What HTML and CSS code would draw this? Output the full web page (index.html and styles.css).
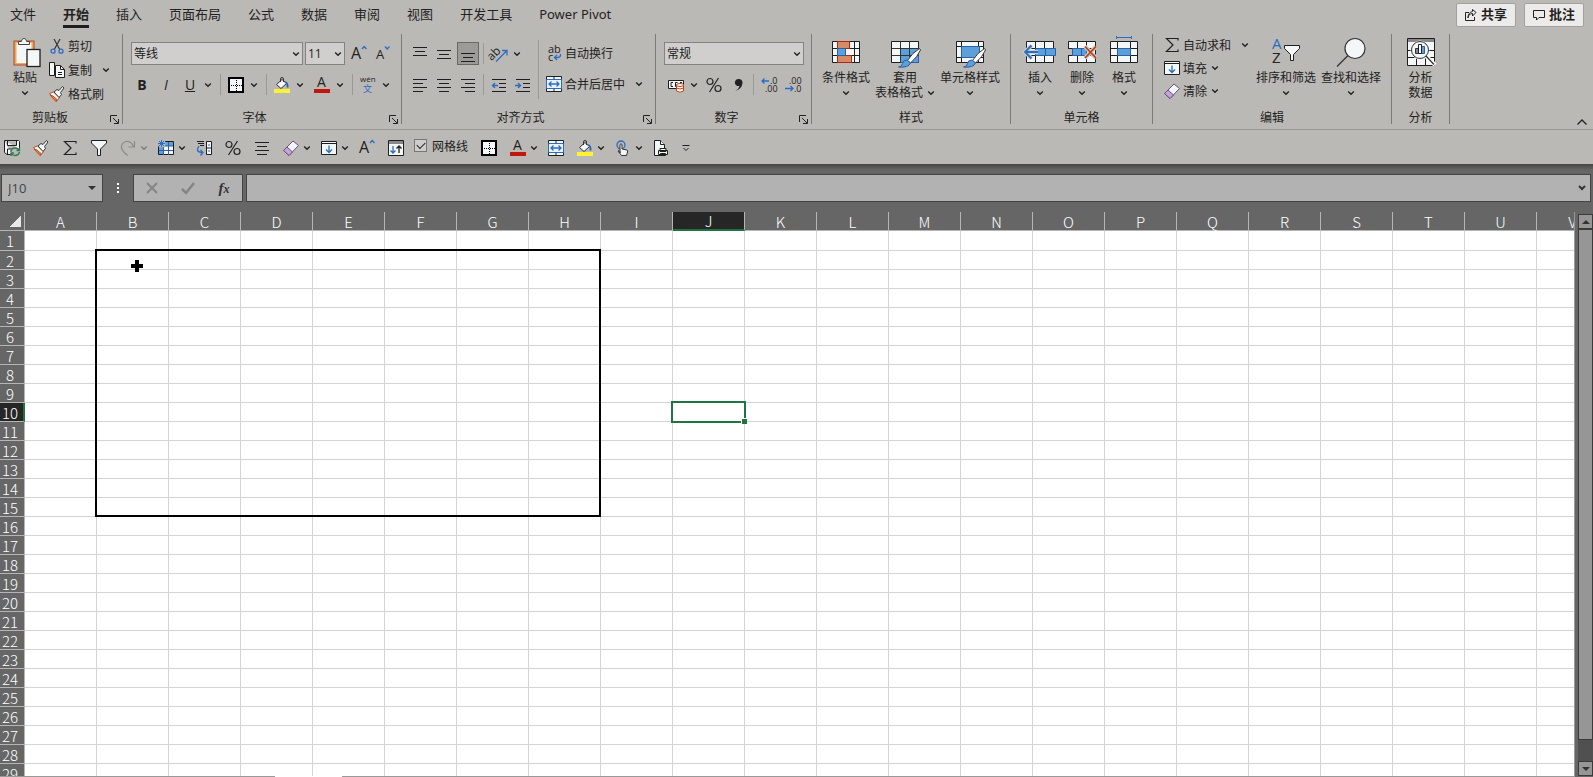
FILE: index.html
```
<!DOCTYPE html>
<html lang="zh-CN">
<head>
    <meta charset="UTF-8">
    <meta name="viewport" content="width=device-width, initial-scale=1.0">
    <title>工作簿</title>
    <link rel="stylesheet" href="styles.css">
</head>
<body>
    <svg class="sprite" aria-hidden="true">
        <symbol id="chev" viewBox="0 0 8 8"><path d="M1.2 2.5L4 5.2l2.8-2.7" fill="none" stroke="#222" stroke-width="1.4"/></symbol>
        <symbol id="launch" viewBox="0 0 9 9"><path d="M.5 7V.5H7M3 3l5 5M8.5 4v4.5H4" fill="none" stroke="#222"/></symbol>
        <symbol id="paste" viewBox="-2 0 30 30">
            <rect x="2" y="4" width="20" height="24" fill="#e9ad62" stroke="#b5471f"/>
            <rect x="4.500" y="6" width="15" height="20" fill="#f4f7f7"/>
            <path d="M6.500 7.500v-3h3c0-4 5-4 5 0h3v3z" fill="#f4f7f7" stroke="#444"/>
            <rect x="15" y="12.500" width="13" height="17" fill="#f4f7f7" stroke="#1e1e1e" stroke-width="1.300"/>
        </symbol>
        <symbol id="cut" viewBox="0 0 16 16">
            <path d="M5 1l6 11M11 1L5 12" fill="none" stroke="#333" stroke-width="1.200"/>
            <circle cx="4" cy="13.200" r="2" fill="none" stroke="#2b6cc4" stroke-width="1.300"/>
            <circle cx="12" cy="13.200" r="2" fill="none" stroke="#2b6cc4" stroke-width="1.300"/>
        </symbol>
        <symbol id="copy" viewBox="0 0 16 16">
            <path d="M.5.5h5v13h-5z" fill="#f4f7f7" stroke="#1e1e1e"/>
            <path d="M6.500 3.500h5l4 4v8h-9z" fill="#f4f7f7" stroke="#1e1e1e"/>
            <path d="M11.500 3.500v4h4M9 10.500h4M9 12.500h4" fill="none" stroke="#1e1e1e"/>
        </symbol>
        <symbol id="brush" viewBox="0 0 16 16">
            <path d="M.5 7.500l4-1.500 6 5.500-3 4z" fill="#f4f7f7" stroke="#c0501f"/>
            <path d="M1 9l3 1 4 3.500-1 2z" fill="#e8833a" stroke="#c0501f"/>
            <path d="M5 6l3-2.500 2 1L13.500.5l1.500 1.500-3.500 4.500 1 2-2.500 3z" fill="#f4f7f7" stroke="#333"/>
        </symbol>
        <symbol id="borders" viewBox="0 0 16 16"><path d="M1 1h14v14H1z" fill="#f4f7f7" stroke="#000" stroke-width="2"/><path d="M8.500 3v11M3 8.500h11" stroke="#000" stroke-dasharray="1 1"/></symbol>
        <symbol id="fill" viewBox="0 0 16 16">
            <path d="M8 2.500L2.500 7.500l4.500 4 5.500-5z" fill="#f4f7f7" stroke="#333"/>
            <path d="M6.500 5V2q0-1.500 1.500-1.500T9.500 2v3" fill="none" stroke="#333"/>
            <path d="M11 5q3 1 2.500 5.500" fill="none" stroke="#2b5fa8" stroke-width="1.800"/>
            <path d="M0 12h16v4H0z" fill="#fff133"/>
        </symbol>
        <symbol id="top" viewBox="0 0 16 16"><path d="M1 1.500h14M3 5.500h10M1 9.500h14" stroke="#1e1e1e"/></symbol>
        <symbol id="middle" viewBox="0 0 16 16"><path d="M1 4.500h14M3 8.500h10M1 12.500h14" stroke="#1e1e1e"/></symbol>
        <symbol id="bottom" viewBox="0 0 16 16"><path d="M1 7.500h14M3 11.500h10M1 15.500h14" stroke="#1e1e1e"/></symbol>
        <symbol id="left" viewBox="0 0 16 16"><path d="M1 2.500h14M1 6.500h10M1 10.500h14M1 14.500h10" stroke="#1e1e1e"/></symbol>
        <symbol id="center" viewBox="0 0 16 16"><path d="M1 2.500h14M3 6.500h10M1 10.500h14M3 14.500h10" stroke="#1e1e1e"/></symbol>
        <symbol id="right" viewBox="0 0 16 16"><path d="M1 2.500h14M5 6.500h10M1 10.500h14M5 14.500h10" stroke="#1e1e1e"/></symbol>
        <symbol id="outdent" viewBox="0 0 16 16"><path d="M1 2.500h14M8 6.500h7M8 10.500h7M1 14.500h14" stroke="#1e1e1e"/><path d="M7 8.500H1.500M4 6L1.500 8.500 4 11" fill="none" stroke="#2b6cc4" stroke-width="1.400"/></symbol>
        <symbol id="indent" viewBox="0 0 16 16"><path d="M1 2.500h14M8 6.500h7M8 10.500h7M1 14.500h14" stroke="#1e1e1e"/><path d="M0 8.500h5.500M3 6l2.500 2.500L3 11" fill="none" stroke="#2b6cc4" stroke-width="1.400"/></symbol>
        <symbol id="merge" viewBox="0 0 16 16">
            <path d="M.5.5h15v15H.5z" fill="#f4f7f7" stroke="#1e1e1e"/><path d="M8 0v4M8 12v4" stroke="#1e1e1e"/>
            <path d="M.5 3.500h15v9H.5z" fill="#eaf3fb" stroke="#2b6cc4"/>
            <path d="M3 8h10M5.500 5.500L3 8l2.500 2.500M10.500 5.500L13 8l-2.500 2.500" fill="none" stroke="#2b6cc4" stroke-width="1.300"/>
        </symbol>
        <symbol id="money" viewBox="0 0 16 16">
            <path d="M.5 3.500h15v8H.5z" fill="#f4f7f7" stroke="#1e1e1e"/><path d="M5 5.500H3v4h2M9.500 5.500h-2v4h2M12 5.500h2" fill="none" stroke="#1e1e1e"/>
            <path d="M8.500 8v6q3.500 2.500 7 0V8z" fill="#fff" stroke="#c0400f"/><ellipse cx="12" cy="8" rx="3.500" ry="1.500" fill="#fff" stroke="#c0400f"/><path d="M8.500 11q3.500 2 7 0" fill="none" stroke="#c0400f"/>
        </symbol>
        <symbol id="percent" viewBox="0 0 16 16"><circle cx="4" cy="4.500" r="3" fill="none" stroke="#222" stroke-width="1.200"/><circle cx="12" cy="11.500" r="3" fill="none" stroke="#222" stroke-width="1.200"/><path d="M12.500 1l-9 14" stroke="#222" stroke-width="1.200"/></symbol>
        <symbol id="comma" viewBox="0 0 16 16"><path d="M8.500 2a3.500 3.500 0 1 0 1 6.800Q9 12 5 14q7-2 7.500-8Q12.500 2 8.500 2z" fill="#222"/></symbol>
        <symbol id="cond" viewBox="0 0 30 30">
            <path d="M1.500 4.500h27v21h-27zM1.500 11.500h27M1.500 18.500h27M6.500 4.500v21M23.500 4.500v21" fill="#f4f7f7" stroke="#1e1e1e"/>
            <path d="M6.500 4.500h12v7h-12zM6.500 18.500h14v7h-14z" fill="#d58a6a" stroke="#b5240f"/><path d="M6.500 11.500h8v7h-8z" fill="#5ba0d8" stroke="#2b5fa8"/>
        </symbol>
        <symbol id="tablefmt" viewBox="0 0 30 30">
            <path d="M1.500 4.500h27v21h-27z" fill="#f4f7f7" stroke="#1e1e1e"/><path d="M10.500 11.500h18v14h-18z" fill="#5ba0d8" stroke="#2b5fa8"/>
            <path d="M1.500 11.500h27M1.500 18.500h27M10.500 4.500v21M19.500 4.500v21" fill="none" stroke="#333"/>
            <path d="M29.500 11.500q-7 4-12 12l3 2.500q7-6 10-13z" fill="#fff" stroke="#333"/><path d="M17 23q-4 0-4.500 3.500T8.500 30q10 1 12-4z" fill="#5ba0d8" stroke="#2b5fa8"/>
        </symbol>
        <symbol id="cellstyle" viewBox="0 0 30 30">
            <path d="M1.500 4.500h27v21h-27zM1.500 9.500h27M1.500 20.500h27M6.500 4.500v21M23.500 4.500v21" fill="#f4f7f7" stroke="#1e1e1e"/><path d="M6.500 9.500h18v11h-18z" fill="#5ba0d8" stroke="#2b5fa8"/>
            <path d="M29.500 11.500q-7 4-12 12l3 2.500q7-6 10-13z" fill="#fff" stroke="#333"/><path d="M17 23q-4 0-4.500 3.500T8.500 30q10 1 12-4z" fill="#5ba0d8" stroke="#2b5fa8"/>
        </symbol>
        <symbol id="insert" viewBox="0 0 30 30">
            <path d="M1.500 4.500h27v21h-27zM10.500 4.500v21M19.500 4.500v21M1.500 11.500h27M1.500 18.500h27" fill="#f4f7f7" stroke="#1e1e1e"/>
            <path d="M10.500 11.500h20v7h-20zM20.500 11.500v7" fill="#5ba0d8" stroke="#2b5fa8"/><path d="M13 15H0M6.500 8.500L0 15l6.500 6.500" fill="none" stroke="#c9cccc" stroke-width="4"/><path d="M13 15H0M6.500 8.500L0 15l6.500 6.500" fill="none" stroke="#2b6cc4" stroke-width="1.800"/>
        </symbol>
        <symbol id="delete" viewBox="0 0 30 30">
            <path d="M1.500 4.500h27v21h-27zM10.500 4.500v21M19.500 4.500v21M1.500 11.500h27M1.500 18.500h27" fill="#f4f7f7" stroke="#1e1e1e"/>
            <path d="M0 12h5v6H0z" fill="#bbb9b5"/><path d="M5.500 11.500h14v7h-14zM14.500 11.500v7" fill="#5ba0d8" stroke="#2b5fa8"/><path d="M18 9.500l11 11.500M29 9.500L18 21" stroke="#c9cccc" stroke-width="4"/><path d="M18 9.500l11 11.500M29 9.500L18 21" stroke="#c0400f" stroke-width="1.800"/>
        </symbol>
        <symbol id="format" viewBox="0 0 30 30">
            <path d="M1.500 4.500h27v21h-27zM8.500 4.500v21M21.500 4.500v21M1.500 11.500h27M1.500 18.500h27" fill="#f4f7f7" stroke="#1e1e1e"/><path d="M8.500 11.500h13v7h-13z" fill="#5ba0d8" stroke="#2b5fa8"/><path d="M7.500.5h15M7.500-1v3M22.500-1v3" stroke="#2b6cc4"/>
        </symbol>
        <symbol id="sum" viewBox="0 0 16 16"><path d="M14 3.500V1.500H2.500L9 8l-6.500 6.500H14v-2" fill="none" stroke="#222" stroke-width="1.200"/></symbol>
        <symbol id="filldown" viewBox="0 0 16 16"><path d="M.5 1.500h15v13H.5zM.5 3.500h15" fill="#f4f7f7" stroke="#1e1e1e"/><path d="M8 5.500v7M5 9.500l3 3 3-3" fill="none" stroke="#2b6cc4" stroke-width="1.300"/></symbol>
        <symbol id="eraser" viewBox="0 0 16 16"><path d="M10 1l5.500 4.500L6 15.500.5 10.500z" fill="#f4f7f7" stroke="#6b4a86"/><path d="M4 7l5.500 5L6 15.500.5 10.500z" fill="#c2a5d3" stroke="#6b4a86"/></symbol>
        <symbol id="find" viewBox="0 0 30 30"><circle cx="19" cy="11.500" r="10" fill="#f4f7f7" stroke="#333" stroke-width="1.200"/><path d="M12 18.500L1 29.500" stroke="#333" stroke-width="1.300"/></symbol>
        <symbol id="analyze" viewBox="0 0 30 30">
            <path d="M1.500 1.500h27v27h-27zM1.500 13.500h27M1.500 20.500h27M10.500 20v8M19.500 20v8" fill="#f4f7f7" stroke="#1e1e1e"/><path d="M2 2h26v3H2z" fill="#888"/>
            <circle cx="14" cy="13" r="9.500" fill="#f4f7f7"/><path d="M20 19l9 9" stroke="#fff" stroke-width="4"/><circle cx="14" cy="13" r="8.500" fill="#f4f7f7" stroke="#333"/><path d="M20 19l8 8.500" stroke="#333" stroke-width="1.300"/>
            <path d="M9.500 11.500h3v5h-3z" fill="#888" stroke="#333"/><path d="M15.500 9.500h3v7h-3z" fill="#5ba0d8" stroke="#2b5fa8"/><path d="M12.500 7.500h3v9h-3z" fill="#fff" stroke="#1e1e1e"/>
        </symbol>
        <symbol id="save" viewBox="0 0 16 16"><path d="M.5.5h14l1 1V9M8 14.500H3l-2.500-2V.5M3.500.5v5h9v-5M3.500 14v-5h4" fill="#f4f7f7" stroke="#1e1e1e"/><path d="M7 12q0-4 4-4 3 0 4 2.500M15.500 7.500v3h-3M15.500 12q-1 3.500-4.500 3.500-2.500 0-3.500-2M7 16v-3h3" fill="none" stroke="#2f7d54" stroke-width="1.400"/></symbol>
        <symbol id="funnel" viewBox="0 0 16 16"><path d="M.5.500h15v2.500l-6 6v6.500h-3V9l-6-6z" fill="#f4f7f7" stroke="#1e1e1e"/></symbol>
        <symbol id="redo" viewBox="0 0 16 16"><path d="M14.500 1v6H8.500M14 7Q11 1 6 1.500 1 3 1.500 8 2.500 12 8 15.500" fill="none" stroke="#8d8b88" stroke-width="1.200"/></symbol>
        <symbol id="freeze" viewBox="0 0 16 16"><path d="M.5 1.500h15v13H.5z" fill="#f4f7f7" stroke="#1e1e1e"/><path d="M6 2h9v4H6zM1 6h5v8H1z" fill="#5ba0d8"/><path d="M1 6h14M1 10.500h14M5.500 6v9M10.500 2v13" stroke="#2b5fa8"/><circle cx="3.500" cy="3.500" r="4" fill="#bbb9b5"/><path d="M3.500 0v7M0 3.500h7M1 1l5 5M6 1L1 6" stroke="#2b6cc4"/></symbol>
        <symbol id="sortcol" viewBox="0 0 16 16"><path d="M1 1.500h7M2 3.500h6M4 5.500h4" stroke="#1e1e1e"/><path d="M10.500 1.500h5v13h-5z" fill="#f4f7f7" stroke="#1e1e1e"/><path d="M11 8h4" stroke="#1e1e1e"/><path d="M12 5h2M12 11h2" stroke="#2b6cc4"/><path d="M3 6q-4 6 3 6.500M4.500 10L7 12.500 4.500 15.500" fill="none" stroke="#2b6cc4" stroke-width="1.300"/></symbol>
        <symbol id="updown" viewBox="0 0 16 16"><path d="M.5.500h15v15H.5z" fill="#f4f7f7" stroke="#1e1e1e"/><path d="M1 1h14v3H1z" fill="#888"/><path d="M5 6v7M2.500 10.500L5 13l2.500-2.500" fill="none" stroke="#2b6cc4" stroke-width="1.300"/><path d="M11 13V6M8.500 8.500L11 6l2.500 2.500" fill="none" stroke="#1e1e1e" stroke-width="1.300"/></symbol>
        <symbol id="touch" viewBox="0 0 16 16"><circle cx="6" cy="5" r="4" fill="none" stroke="#2b6cc4" stroke-width="1.300"/><path d="M5 13V4.500q1-1.500 2 0V9l5 1q1 .5.500 2l-1 3.500H6.500L3 11q.5-1.500 2 .500z" fill="#f4f7f7" stroke="#333"/></symbol>
        <symbol id="print" viewBox="0 0 16 16"><path d="M1.500.500h6l4 4v11h-10z" fill="#f4f7f7" stroke="#1e1e1e"/><path d="M7.500.500v4h4M7 8.500h6v3H7zM5.500 10.500h9v4h-9zM7.500 13.500h5v2h-5z" fill="#f4f7f7" stroke="#1e1e1e"/></symbol>
        <symbol id="more" viewBox="0 0 8 8"><path d="M.5 1.500h7M1.500 4L4 6.500 6.500 4" fill="none" stroke="#222"/></symbol>
        <symbol id="share" viewBox="0 0 12 12"><path d="M4 3.500H.5v8h9V8M3 9q0-4 4.500-4.500V7L11 3.500 7.500.5v2Q3 3.500 3 9z" fill="none" stroke="#222"/></symbol>
        <symbol id="comment" viewBox="0 0 12 12"><path d="M.5 1.500h11v7H6L3.500 11V8.500h-3z" fill="none" stroke="#222"/></symbol>
    </svg>

    <header class="top">
        <nav class="tabs">
            <a href="#">文件</a>
            <a href="#" class="active">开始</a>
            <a href="#">插入</a>
            <a href="#">页面布局</a>
            <a href="#">公式</a>
            <a href="#">数据</a>
            <a href="#">审阅</a>
            <a href="#">视图</a>
            <a href="#">开发工具</a>
            <a href="#">Power Pivot</a>
        </nav>
        <div class="actions">
            <button><svg><use href="#share"/></svg>共享</button>
            <button><svg><use href="#comment"/></svg>批注</button>
        </div>
    </header>

    <section class="ribbon">
        <div class="group clipboard">
            <div class="body">
                <button class="big"><svg><use href="#paste"/></svg>粘贴<svg class="chev"><use href="#chev"/></svg></button>
                <div class="stack">
                    <button class="cmd"><svg><use href="#cut"/></svg>剪切</button>
                    <button class="cmd"><svg><use href="#copy"/></svg>复制<svg class="chev far"><use href="#chev"/></svg></button>
                    <button class="cmd"><svg><use href="#brush"/></svg>格式刷</button>
                </div>
            </div>
            <div class="title">剪贴板</div>
            <button class="launch" aria-label="剪贴板设置"><svg><use href="#launch"/></svg></button>
        </div>

        <div class="group font">
            <div class="body rows">
                <div class="row">
                    <div class="combo name"><select aria-label="字体"><option>等线</option></select><svg class="chev"><use href="#chev"/></svg></div>
                    <div class="combo size"><select aria-label="字号"><option>11</option></select><svg class="chev"><use href="#chev"/></svg></div>
                    <button class="tool" aria-label="增大字号"><svg viewBox="0 0 16 16"><text x="0" y="13" font-size="16">A</text><path d="M11 3l2.200-2.500L15.500 3" fill="none" stroke="#2b6cc4" stroke-width="1.300"/></svg></button>
                    <button class="tool" aria-label="减小字号"><svg viewBox="0 0 16 16"><text x="1" y="13" font-size="13">A</text><path d="M10 .5L12.200 3 14.500.5" fill="none" stroke="#2b6cc4" stroke-width="1.300"/></svg></button>
                </div>
                <div class="row">
                    <button class="tool"><b>B</b></button>
                    <button class="tool"><i>I</i></button>
                    <button class="tool"><u>U</u></button>
                    <button class="drop" aria-label="下划线"><svg class="chev"><use href="#chev"/></svg></button>
                    <span class="sep"></span>
                    <button class="tool" aria-label="边框"><svg><use href="#borders"/></svg></button>
                    <button class="drop" aria-label="更多边框"><svg class="chev"><use href="#chev"/></svg></button>
                    <span class="sep"></span>
                    <button class="tool" aria-label="填充颜色"><svg><use href="#fill"/></svg></button>
                    <button class="drop wide" aria-label="更多填充"><svg class="chev"><use href="#chev"/></svg></button>
                    <button class="tool" aria-label="字体颜色"><svg viewBox="0 0 16 16"><text x="3" y="10" font-size="14">A</text><path d="M0 12h16v4H0z" fill="#c3170d"/></svg></button>
                    <button class="drop" aria-label="更多颜色"><svg class="chev"><use href="#chev"/></svg></button>
                    <span class="sep"></span>
                    <button class="tool" aria-label="拼音"><svg viewBox="0 0 16 16"><text x="0" y="5" font-size="8">wén</text><text class="blue" x="3" y="15" font-size="9">文</text></svg></button>
                    <button class="drop" aria-label="更多拼音"><svg class="chev"><use href="#chev"/></svg></button>
                </div>
            </div>
            <div class="title">字体</div>
            <button class="launch" aria-label="字体设置"><svg><use href="#launch"/></svg></button>
        </div>

        <div class="group align">
            <div class="body">
                <div class="rows">
                    <div class="row">
                        <button class="tool" aria-label="顶端对齐"><svg><use href="#top"/></svg></button>
                        <button class="tool" aria-label="垂直居中"><svg><use href="#middle"/></svg></button>
                        <button class="tool on" aria-label="底端对齐"><svg><use href="#bottom"/></svg></button>
                        <span class="sep tight"></span>
                        <button class="tool" aria-label="方向"><svg viewBox="0 0 16 16"><text x="-3" y="11" font-size="12" transform="rotate(-45 4 9)">ab</text><path d="M5 15.500L15.500 5M11 4.500h5v5" fill="none" stroke="#2b6cc4" stroke-width="1.300"/></svg></button>
                        <button class="drop" aria-label="更多方向"><svg class="chev"><use href="#chev"/></svg></button>
                    </div>
                    <div class="row">
                        <button class="tool" aria-label="左对齐"><svg><use href="#left"/></svg></button>
                        <button class="tool" aria-label="居中"><svg><use href="#center"/></svg></button>
                        <button class="tool" aria-label="右对齐"><svg><use href="#right"/></svg></button>
                        <span class="sep tight"></span>
                        <button class="tool" aria-label="减少缩进"><svg><use href="#outdent"/></svg></button>
                        <button class="tool" aria-label="增加缩进"><svg><use href="#indent"/></svg></button>
                    </div>
                </div>
                <div class="rows merge">
                    <div class="row"><button class="cmd"><svg viewBox="0 0 16 16"><text x="2" y="8" font-size="11">ab</text><text x="2" y="16" font-size="11">c</text><path d="M14.500 9v1q0 2.500-3 2.500H8.500M11 10l-2.500 2.500L11 15" fill="none" stroke="#2b6cc4" stroke-width="1.300"/></svg>自动换行</button></div>
                    <div class="row"><button class="cmd"><svg><use href="#merge"/></svg>合并后居中<svg class="chev far"><use href="#chev"/></svg></button></div>
                </div>
            </div>
            <div class="title">对齐方式</div>
            <button class="launch" aria-label="对齐设置"><svg><use href="#launch"/></svg></button>
        </div>

        <div class="group number">
            <div class="body rows">
                <div class="row">
                    <div class="combo format"><select aria-label="数字格式"><option>常规</option></select><svg class="chev"><use href="#chev"/></svg></div>
                </div>
                <div class="row">
                    <button class="tool" aria-label="会计格式"><svg><use href="#money"/></svg></button>
                    <button class="drop" aria-label="更多货币"><svg class="chev"><use href="#chev"/></svg></button>
                    <button class="tool percent" aria-label="百分比"><svg><use href="#percent"/></svg></button>
                    <button class="tool" aria-label="千位分隔"><svg><use href="#comma"/></svg></button>
                    <span class="sep tight"></span>
                    <button class="tool" aria-label="增加小数位"><svg viewBox="0 0 16 16"><text x="9" y="7" font-size="9">.0</text><text x="4" y="15" font-size="9">.00</text><path d="M8 4H1M3.500 1.500L1 4l2.500 2.500" fill="none" stroke="#2b6cc4" stroke-width="1.300"/></svg></button>
                    <button class="tool" aria-label="减少小数位"><svg viewBox="0 0 16 16"><text x="4" y="7" font-size="9">.00</text><text x="9" y="15" font-size="9">.0</text><path d="M0 11.500h8M5.500 9L8 11.500 5.500 14" fill="none" stroke="#2b6cc4" stroke-width="1.300"/></svg></button>
                </div>
            </div>
            <div class="title">数字</div>
            <button class="launch" aria-label="数字设置"><svg><use href="#launch"/></svg></button>
        </div>

        <div class="group styles">
            <div class="body">
                <button class="big"><svg><use href="#cond"/></svg>条件格式<svg class="chev"><use href="#chev"/></svg></button>
                <button class="big"><svg><use href="#tablefmt"/></svg>套用<span>表格格式<svg class="chev"><use href="#chev"/></svg></span></button>
                <button class="big"><svg><use href="#cellstyle"/></svg>单元格样式<svg class="chev"><use href="#chev"/></svg></button>
            </div>
            <div class="title">样式</div>
        </div>

        <div class="group cells">
            <div class="body">
                <button class="big"><svg><use href="#insert"/></svg>插入<svg class="chev"><use href="#chev"/></svg></button>
                <button class="big"><svg><use href="#delete"/></svg>删除<svg class="chev"><use href="#chev"/></svg></button>
                <button class="big"><svg><use href="#format"/></svg>格式<svg class="chev"><use href="#chev"/></svg></button>
            </div>
            <div class="title">单元格</div>
        </div>

        <div class="group edit">
            <div class="body">
                <div class="stack">
                    <button class="cmd"><svg><use href="#sum"/></svg>自动求和<svg class="chev far"><use href="#chev"/></svg></button>
                    <button class="cmd"><svg><use href="#filldown"/></svg>填充<svg class="chev"><use href="#chev"/></svg></button>
                    <button class="cmd"><svg><use href="#eraser"/></svg>清除<svg class="chev"><use href="#chev"/></svg></button>
                </div>
                <button class="big"><svg viewBox="0 0 30 30"><text class="blue" x="1" y="12" font-size="15">A</text><text x="1" y="26" font-size="15">Z</text><path d="M13.500 8.500h15v3l-6 6v6h-3v-6l-6-6z" fill="#f4f7f7" stroke="#1e1e1e"/></svg>排序和筛选<svg class="chev"><use href="#chev"/></svg></button>
                <button class="big"><svg><use href="#find"/></svg>查找和选择<svg class="chev"><use href="#chev"/></svg></button>
            </div>
            <div class="title">编辑</div>
        </div>

        <div class="group analysis">
            <div class="body">
                <button class="big"><svg><use href="#analyze"/></svg>分析<span>数据</span></button>
            </div>
            <div class="title">分析</div>
        </div>

        <button class="collapse" aria-label="折叠功能区"><svg viewBox="0 0 10 6"><path d="M.5 5.500L5 1l4.500 4.500" fill="none" stroke="#222" stroke-width="1.300"/></svg></button>
    </section>

    <div class="quick">
        <button aria-label="保存"><svg><use href="#save"/></svg></button>
        <button aria-label="格式刷"><svg><use href="#brush"/></svg></button>
        <button aria-label="求和"><svg><use href="#sum"/></svg></button>
        <button aria-label="筛选"><svg><use href="#funnel"/></svg></button>
        <button class="split off" aria-label="恢复"><svg><use href="#redo"/></svg><svg class="chev"><use href="#chev"/></svg></button>
        <button class="split" aria-label="冻结窗格"><svg><use href="#freeze"/></svg><svg class="chev"><use href="#chev"/></svg></button>
        <button aria-label="排序"><svg><use href="#sortcol"/></svg></button>
        <button aria-label="百分比"><svg><use href="#percent"/></svg></button>
        <button aria-label="居中"><svg><use href="#center"/></svg></button>
        <button class="split" aria-label="清除"><svg><use href="#eraser"/></svg><svg class="chev"><use href="#chev"/></svg></button>
        <button class="split" aria-label="填充"><svg><use href="#filldown"/></svg><svg class="chev"><use href="#chev"/></svg></button>
        <button aria-label="增大字号"><svg viewBox="0 0 16 16"><text x="0" y="13" font-size="16">A</text><path d="M11 3l2.200-2.500L15.500 3" fill="none" stroke="#2b6cc4" stroke-width="1.300"/></svg></button>
        <button aria-label="行高"><svg><use href="#updown"/></svg></button>
        <label><input type="checkbox" checked>网格线</label>
        <button aria-label="边框"><svg><use href="#borders"/></svg></button>
        <button class="split" aria-label="字体颜色"><svg viewBox="0 0 16 16"><text x="3" y="10" font-size="14">A</text><path d="M0 12h16v4H0z" fill="#c3170d"/></svg><svg class="chev"><use href="#chev"/></svg></button>
        <button aria-label="合并"><svg><use href="#merge"/></svg></button>
        <button class="split" aria-label="填充颜色"><svg><use href="#fill"/></svg><svg class="chev"><use href="#chev"/></svg></button>
        <button class="split" aria-label="触摸模式"><svg><use href="#touch"/></svg><svg class="chev"><use href="#chev"/></svg></button>
        <button aria-label="打印预览"><svg><use href="#print"/></svg></button>
        <button aria-label="自定义"><svg class="chev"><use href="#more"/></svg></button>
    </div>

    <div class="formula">
        <div class="namebox"><input type="text" value="J10" aria-label="名称框"><svg viewBox="0 0 8 4"><path d="M0 0h8L4 4z" fill="#333"/></svg></div>
        <span class="dots"></span>
        <div class="fx">
            <button aria-label="取消"><svg viewBox="0 0 12 12"><path d="M1 1l10 10M11 1L1 11" stroke="#858585" stroke-width="2"/></svg></button>
            <button aria-label="输入"><svg viewBox="0 0 12 12"><path d="M0 7l4 4 8-10" fill="none" stroke="#858585" stroke-width="2.500"/></svg></button>
            <button aria-label="插入函数"><i>f<small>x</small></i></button>
        </div>
        <div class="entry"><input type="text" aria-label="编辑栏"><svg class="chev" viewBox="0 0 8 8"><path d="M1 2l3 3 3-3" fill="none" stroke="#333" stroke-width="2"/></svg></div>
    </div>

    <main class="work">
        <div class="sheet">
            <table id="grid"></table>
        </div>
        <div class="scroll">
            <button aria-label="向上"><svg viewBox="0 0 8 4"><path d="M0 4h8L4 0z" fill="#333"/></svg></button>
            <div class="track"><div class="thumb"></div></div>
            <button aria-label="向下"><svg viewBox="0 0 8 4"><path d="M0 0h8L4 4z" fill="#333"/></svg></button>
        </div>
    </main>
    <div class="edge"><span></span></div>

    <script>
        const columns = "ABCDEFGHIJKLMNOPQRSTUV".split("");
        const rowCount = 29;
        const selected = { col: "J", row: 10 };

        function cellClass(col, row) {
            if (col === selected.col && row === selected.row) return "selected";
            // top left cell of the outlined range B2:H15
            if (col === "B" && row === 2) return "range";
            return "";
        }

        let html = "<thead><tr><th class='corner'></th>";
        html += columns.map(col => `<th class="${col === selected.col ? "current" : ""}">${col}</th>`).join("");
        html += "</tr></thead><tbody>";
        for (let row = 1; row <= rowCount; row++) {
            html += `<tr><th class="${row === selected.row ? "current" : ""}">${row}</th>`;
            html += columns.map(col => `<td class="${cellClass(col, row)}"></td>`).join("");
            html += "</tr>";
        }
        document.getElementById("grid").innerHTML = html + "</tbody>";
    </script>
</body>
</html>
```
FILE: styles.css
```
*, *::before, *::after {
    box-sizing: border-box;
}
body {
    margin: 0;
    height: 100vh;
    display: flex;
    flex-direction: column;
    overflow: hidden;
    background: #666;
    color: #222;
    font-family: "Open Sans", "Noto Sans CJK SC", sans-serif;
    font-size: 12px;
}
button {
    display: flex;
    align-items: center;
    justify-content: center;
    padding: 0;
    border: none;
    background: none;
    color: inherit;
    font: inherit;
    white-space: nowrap;
}
svg {
    display: block;
    width: 16px;
    height: 16px;
    flex: none;
    overflow: visible;
}
symbol {
    overflow: visible;
}
svg text {
    fill: #222;
}
svg text.blue {
    fill: #2b6cc4;
}
svg.chev {
    width: 8px;
    height: 8px;
}
.sprite {
    position: absolute;
    width: 0;
    height: 0;
}

.top {
    display: flex;
    justify-content: space-between;
    background: #bbb9b5;
    height: 34px;
    padding: 0 9px 0 10px;
}
.tabs {
    display: flex;
    gap: 27px;
    font-family: "Noto Sans", "Noto Sans CJK SC", sans-serif;
    font-size: 13px;
}
.tabs a {
    height: 28px;
    line-height: 28px;
    color: #222;
    text-decoration: none;
}
.tabs a.active {
    font-weight: bold;
    border-bottom: 3px solid #1e1e1e;
}
.actions {
    display: flex;
    gap: 8px;
    padding-top: 3px;
}
.actions button {
    width: 60px;
    height: 24px;
    gap: 4px;
    padding-bottom: 3px;
    background: #edebe9;
    border: 1px solid #a3a19e;
    border-radius: 2px;
    font-size: 13px;
    font-weight: bold;
}
.actions svg {
    width: 12px;
    height: 12px;
    margin-top: 2px;
}

.ribbon {
    position: relative;
    display: flex;
    background: #bbb9b5;
    border-bottom: 1px solid #9b9996;
    padding-bottom: 5px;
}
.group {
    position: relative;
    height: 90px;
    border-right: 1px solid #7c7a78;
}
.body {
    display: flex;
    height: 74px;
}
.title {
    line-height: 20px;
    text-align: center;
    padding-right: 22px;
}
.styles .title, .cells .title, .edit .title, .analysis .title {
    padding-right: 0;
}
.launch {
    position: absolute;
    right: 3px;
    bottom: 0;
}
.launch svg {
    width: 9px;
    height: 9px;
}
.big {
    flex-direction: column;
    justify-content: flex-start;
    padding-top: 3px;
    line-height: 15px;
}
.big > svg:first-child {
    width: 30px;
    height: 30px;
    margin-bottom: 3px;
}
.big > .chev {
    margin-top: 4px;
}
.big span {
    display: flex;
    align-items: center;
    gap: 4px;
}
.stack {
    display: flex;
    flex-direction: column;
}
.cmd {
    height: 24px;
    gap: 3px;
    padding-bottom: 1px;
    justify-content: flex-start;
}
.cmd .chev {
    margin-left: 1px;
}
.cmd .chev.far {
    margin-left: 7px;
}
.rows {
    display: flex;
    flex-direction: column;
    gap: 8px;
    padding-top: 8px;
}
.row {
    display: flex;
    align-items: center;
    height: 23px;
}
.tool {
    width: 24px;
    height: 23px;
    font-size: 14px;
}
.tool.on {
    width: 22px;
    margin: 0 1px;
    background: #9d9b98;
    border: 1px solid #6a6866;
}
.drop {
    width: 12px;
    height: 23px;
}
.drop.wide {
    width: 16px;
    padding-right: 4px;
}
.sep {
    flex: none;
    width: 1px;
    height: 21px;
    margin: 0 3px 0 6px;
    background: #9b9996;
}
.sep.tight {
    margin: 0 3px;
}
.combo {
    position: relative;
    height: 23px;
}
.combo select {
    appearance: none;
    width: 100%;
    height: 23px;
    padding: 0 6px 0 2px;
    border: 1px solid #858380;
    border-radius: 0;
    background: #d1cfcd;
    color: #222;
    font: inherit;
}
.combo .chev {
    position: absolute;
    right: 3px;
    top: 8px;
}
.combo.name {
    width: 172px;
    margin-left: 1px;
}
.combo.size {
    width: 40px;
    margin: 0 2px;
}
.combo.format {
    width: 140px;
}

.clipboard {
    width: 123px;
}
.clipboard .body {
    gap: 9px;
    padding-left: 10px;
}
.clipboard .big {
    width: 30px;
}
.font {
    width: 279px;
    padding-left: 7px;
}
.align {
    width: 254px;
    padding-left: 6px;
}
.align .merge {
    height: 65px;
    margin-left: 3px;
    padding-left: 8px;
    background: linear-gradient(#9b9996, #9b9996) 0 6px / 1px 59px no-repeat;
}
.number {
    width: 156px;
    padding-left: 8px;
}
.number .percent {
    margin-left: 2px;
}
.styles {
    width: 199px;
}
.styles .body {
    gap: 5px;
    padding-left: 10px;
}
.cells {
    width: 142px;
}
.cells .body {
    gap: 6px;
    padding-left: 11px;
}
.cells .big {
    width: 36px;
}
.edit {
    width: 239px;
}
.edit .body {
    gap: 5px;
    padding-left: 11px;
}
.edit .stack {
    width: 87px;
}
.edit .cmd {
    height: 23px;
}
.analysis {
    width: 58px;
}
.analysis .body {
    justify-content: center;
}
.collapse {
    position: absolute;
    right: 6px;
    bottom: 4px;
}
.collapse svg {
    width: 10px;
    height: 6px;
}

.quick {
    display: flex;
    align-items: center;
    gap: 13px;
    height: 34px;
    flex: none;
    padding: 1px 4px 0;
    background: #bbb9b5;
}
.quick .split {
    gap: 4px;
    margin-right: -3px;
}
.quick .off .chev {
    opacity: 0.4;
}
.quick label {
    display: flex;
    align-items: center;
    gap: 5px;
    margin: -4px 0 0 -3px;
}
.quick input {
    appearance: none;
    width: 13px;
    height: 13px;
    margin: 0;
    border: 1px solid #777;
    background: #cfcdca;
}
.quick input:checked::after {
    content: "";
    display: block;
    width: 8px;
    height: 5px;
    margin: 2px;
    border-left: 1px solid #222;
    border-bottom: 1px solid #222;
    transform: rotate(-45deg);
}

.formula {
    display: flex;
    flex: none;
    height: 48px;
    padding: 10px 2px 10px 1px;
    background: linear-gradient(#454545, #666 6px);
}
.namebox, .fx, .entry {
    display: flex;
    align-items: center;
    background: #b2b2b2;
    border: 1px solid #444;
}
.namebox {
    width: 102px;
    padding-right: 6px;
}
.formula input {
    flex: 1;
    min-width: 0;
    height: 100%;
    padding: 0 6px;
    border: none;
    background: none;
    color: #444;
    font: inherit;
    font-size: 13px;
}
.namebox svg {
    width: 8px;
    height: 4px;
}
.dots {
    width: 2px;
    height: 10px;
    margin: 9px 14px 0;
    background: repeating-linear-gradient(#fff 0 2px, transparent 2px 4px);
}
.fx {
    width: 110px;
    margin-right: 3px;
}
.fx button {
    width: 36px;
    color: #333;
    font-family: "Liberation Serif", serif;
    font-size: 15px;
    font-weight: bold;
}
.fx svg {
    width: 12px;
    height: 12px;
}
.fx small {
    font-size: 12px;
}
.entry {
    flex: 1;
    padding-right: 4px;
}

.work {
    display: flex;
    flex: 1;
    min-height: 0;
}
.sheet {
    flex: 1;
    min-width: 0;
    overflow: hidden;
    border-right: 1px solid #999;
    background: #fff;
}
table {
    width: 1609px;
    table-layout: fixed;
    border-collapse: separate;
    border-spacing: 0;
    font-family: "Noto Sans CJK SC", sans-serif;
    font-size: 15px;
}
th, td {
    width: 72px;
    height: 19px;
    padding: 0;
    border: 0 solid #d4d4d4;
    border-width: 0 1px 1px 0;
}
tbody tr:first-child > * {
    height: 20px;
}
th {
    background: #666;
    border-color: #b5b5b5;
    color: #fff;
    font-weight: 300;
    line-height: 17px;
}
tbody th {
    padding-right: 4px;
}
th.corner {
    width: 25px;
    background: linear-gradient(135deg, transparent 50%, #e8e8e8 50%) 10px 4px / 11px 11px no-repeat #666;
}
th.current {
    background: #262626;
}
thead .current {
    border-bottom: 2px solid #217346;
}
tbody .current {
    border-right: 2px solid #217346;
    padding-right: 3px;
}
td.selected, td.range {
    position: relative;
}
td.selected::before {
    content: "";
    position: absolute;
    inset: -2px;
    border: 2px solid #217346;
}
td.selected::after {
    content: "";
    position: absolute;
    right: -3px;
    bottom: -3px;
    width: 6px;
    height: 6px;
    background: #217346;
    border: solid #fff;
    border-width: 1px 0 0 1px;
}
/* 7 columns by 14 rows */
td.range::before {
    content: "";
    position: absolute;
    left: -2px;
    top: -2px;
    width: calc(7 * 72px + 2px);
    height: calc(14 * 19px + 2px);
    border: 2px solid #000;
}
/* cell cursor */
td.range::after {
    content: "";
    position: absolute;
    left: 34px;
    top: 9px;
    width: 12px;
    height: 12px;
    background: linear-gradient(#000, #000) 4px 0 / 4px 12px no-repeat, linear-gradient(#000, #000) 0 4px / 12px 4px no-repeat;
}
.scroll {
    display: flex;
    flex-direction: column;
    width: 15px;
    margin: 2px 0 0 3px;
}
.scroll button {
    width: 15px;
    height: 15px;
    background: #969696;
    border: 1px solid #3a3a3a;
}
.scroll svg {
    width: 8px;
    height: 4px;
}
.track {
    flex: 1;
    background: #505050;
}
.thumb {
    height: 96%;
    background: #969696;
    border: 1px solid #3a3a3a;
}
.edge {
    height: 1px;
    flex: none;
    margin-right: 18px;
    background: #999;
}
.edge span {
    display: block;
    width: 67px;
    height: 1px;
    margin-left: 275px;
    background: #fff;
}
```
